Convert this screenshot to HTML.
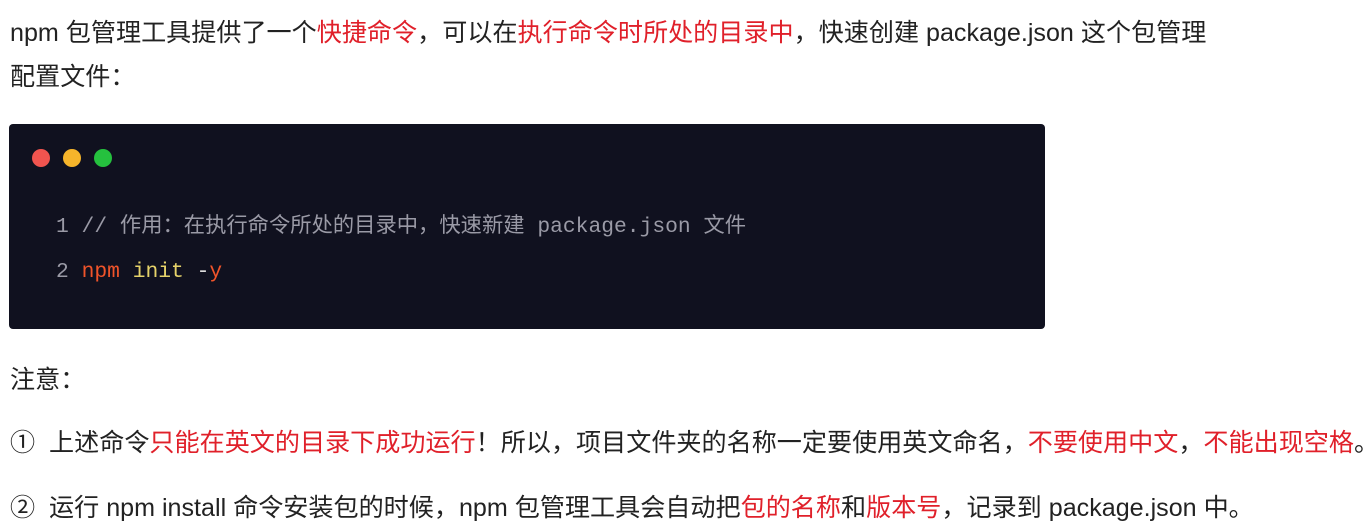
<!DOCTYPE html>
<html><head><meta charset="utf-8"><style>
body{margin:0;width:1363px;height:526px;background:#fff;overflow:hidden;position:relative;font-family:"Liberation Sans","Noto Sans CJK SC",sans-serif;color:#222;font-size:25.1px}
.l{position:absolute;left:10px;white-space:nowrap;line-height:30px}
.r{color:#e0202a}
.code{position:absolute;left:9px;top:124px;width:1036px;height:205px;background:#10111f;border-radius:4px}
.d{position:absolute;top:149px;width:18px;height:18px;border-radius:50%}
.c{position:absolute;left:56px;white-space:nowrap;font-family:"Liberation Mono","Noto Sans CJK SC",monospace;font-size:21.3px;color:#9a9aa6;line-height:26px}
</style></head><body>
<div class="l" style="top:18px">npm 包管理工具提供了一个<span class="r">快捷命令</span>，可以在<span class="r">执行命令时所处的目录中</span>，快速创建 package.json 这个包管理</div>
<div class="l" style="top:62px">配置文件：</div>
<div class="code"></div>
<div class="d" style="left:32px;background:#f0544f"></div>
<div class="d" style="left:63px;background:#f6b52b"></div>
<div class="d" style="left:94px;background:#25c13e"></div>
<div class="c" style="top:214px">1 // 作用：在执行命令所处的目录中，快速新建 package.json 文件</div>
<div class="c" style="top:259px">2 <span style="color:#f0542a">npm</span> <span style="color:#e6d36a">init</span> <span style="color:#ddd">-</span><span style="color:#f0542a">y</span></div>
<div class="l" style="top:365px">注意：</div>
<div class="l" style="top:428px">①&nbsp; 上述命令<span class="r">只能在英文的目录下成功运行</span>！所以，项目文件夹的名称一定要使用英文命名，<span class="r">不要使用中文</span>，<span class="r">不能出现空格</span>。</div>
<div class="l" style="top:493px">②&nbsp; 运行 npm install 命令安装包的时候，npm 包管理工具会自动把<span class="r">包的名称</span>和<span class="r">版本号</span>，记录到 package.json 中。</div>
</body></html>
